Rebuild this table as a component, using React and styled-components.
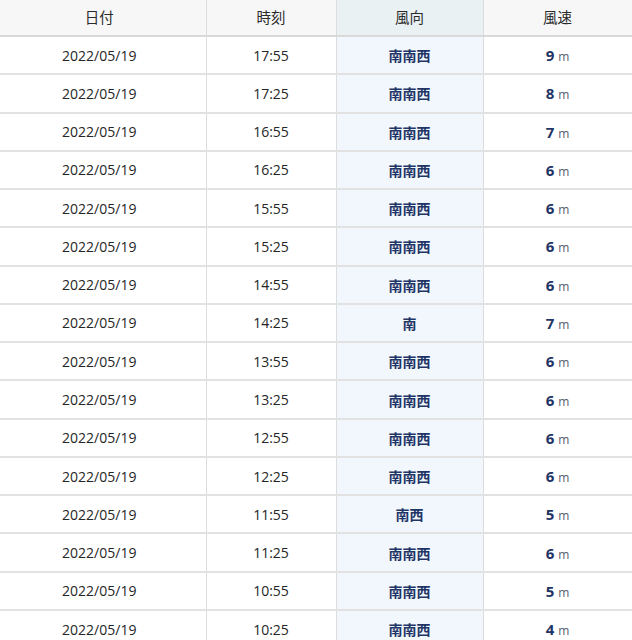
import React from "react";
import styled, { createGlobalStyle } from "styled-components";

const GlobalStyle = createGlobalStyle`
  html, body {
    margin: 0;
    padding: 0;
    background: #fff;
    overflow: hidden;
  }
  body {
    font-family: "Open Sans", "Noto Sans CJK JP", sans-serif;
    color: #333;
  }
`;

const Wrap = styled.div`
  width: 632px;
  overflow: hidden;
`;

const Table = styled.table`
  margin-left: -7px;
  width: 639px;
  table-layout: fixed;
  border-collapse: collapse;
  font-size: 14px;
`;

const Th = styled.th`
  height: 32px;
  padding: 0 0 3px;
  font-weight: normal;
  font-family: "Noto Sans CJK JP", sans-serif;
  font-size: 14.5px;
  color: #2a2a2a;
  background: ${(p) => (p.$accent ? "#e9f1f3" : "#f7f7f7")};
  border-right: 1px solid #dcdcdc;
  border-bottom: 2px solid #d9d9d9;
  text-align: center;
`;

const Row = styled.tr`
  height: 38.27px;
`;

const Td = styled.td`
  padding: 0;
  text-align: center;
  border-right: 1px solid #dcdcdc;
  border-bottom: 2px solid #e2e2e2;
  background: ${(p) => (p.$accent ? "#f1f7fd" : "#fff")};
  color: #262626;
`;

const Dir = styled.span`
  font-family: "Noto Sans CJK JP", sans-serif;
  font-weight: 700;
  font-size: 14px;
  color: #1f3566;
`;

const Speed = styled.span`
  font-weight: 700;
  font-size: 15px;
  color: #1f3566;
`;

const Unit = styled.span`
  margin-left: 4px;
  font-size: 12px;
  color: #555d6e;
`;

const rows = [
  ["17:55", "南南西", 9],
  ["17:25", "南南西", 8],
  ["16:55", "南南西", 7],
  ["16:25", "南南西", 6],
  ["15:55", "南南西", 6],
  ["15:25", "南南西", 6],
  ["14:55", "南南西", 6],
  ["14:25", "南", 7],
  ["13:55", "南南西", 6],
  ["13:25", "南南西", 6],
  ["12:55", "南南西", 6],
  ["12:25", "南南西", 6],
  ["11:55", "南西", 5],
  ["11:25", "南南西", 6],
  ["10:55", "南南西", 5],
  ["10:25", "南南西", 4],
];

export default function App() {
  return (
    <Wrap>
      <GlobalStyle />
      <Table>
        <colgroup>
          <col style={{ width: 213 }} />
          <col style={{ width: 130 }} />
          <col style={{ width: 147 }} />
          <col style={{ width: 149 }} />
        </colgroup>
        <thead>
          <tr>
            <Th>日付</Th>
            <Th>時刻</Th>
            <Th $accent>風向</Th>
            <Th>風速</Th>
          </tr>
        </thead>
        <tbody>
          {rows.map(([time, dir, speed]) => (
            <Row key={time}>
              <Td>2022/05/19</Td>
              <Td>{time}</Td>
              <Td $accent>
                <Dir>{dir}</Dir>
              </Td>
              <Td>
                <Speed>{speed}</Speed>
                <Unit>m</Unit>
              </Td>
            </Row>
          ))}
        </tbody>
      </Table>
    </Wrap>
  );
}
